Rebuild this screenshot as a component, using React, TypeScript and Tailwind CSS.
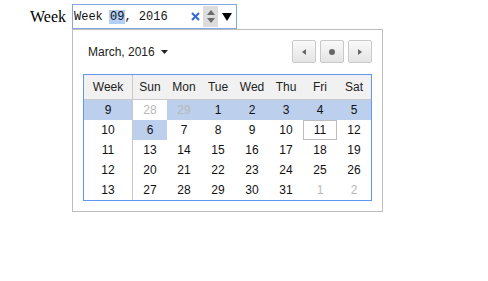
import React from "react";

type Day = { n: number; muted?: boolean; hl?: boolean; today?: boolean };

interface Row {
  week: number;
  weekHl?: boolean;
  days: Day[];
}

const rows: Row[] = [
  {
    week: 9,
    weekHl: true,
    days: [
      { n: 28, muted: true },
      { n: 29, muted: true, hl: true },
      { n: 1, hl: true },
      { n: 2, hl: true },
      { n: 3, hl: true },
      { n: 4, hl: true },
      { n: 5, hl: true },
    ],
  },
  {
    week: 10,
    days: [{ n: 6, hl: true }, { n: 7 }, { n: 8 }, { n: 9 }, { n: 10 }, { n: 11, today: true }, { n: 12 }],
  },
  { week: 11, days: [13, 14, 15, 16, 17, 18, 19].map((n) => ({ n })) },
  { week: 12, days: [20, 21, 22, 23, 24, 25, 26].map((n) => ({ n })) },
  {
    week: 13,
    days: [{ n: 27 }, { n: 28 }, { n: 29 }, { n: 30 }, { n: 31 }, { n: 1, muted: true }, { n: 2, muted: true }],
  },
];

const heads = ["Sun", "Mon", "Tue", "Wed", "Thu", "Fri", "Sat"];

const NavButton = ({ children }: { children: React.ReactNode }) => (
  <button className="w-[24px] h-[23px] flex items-center justify-center rounded-[2px] border border-[#c9c9c9] bg-gradient-to-b from-[#fafafa] to-[#e4e4e4]">
    {children}
  </button>
);

const App = () => {
  return (
    <div className="w-[488px] h-[281px] bg-white pt-[4px] pl-[30px] font-['Liberation_Sans',Arial,sans-serif]">
      {/* input row */}
      <div className="flex items-center">
        <span className="w-[42px] text-[16px] leading-none text-black font-['Liberation_Serif','Times_New_Roman',serif]">
          Week
        </span>
        <div className="w-[165px] h-[25px] border border-[#7fa7ea] flex items-center pl-[1px] pr-[4px]">
          <span className="text-[12px] text-[#111] font-['Liberation_Mono',monospace] whitespace-pre">
            Week <span className="bg-[#b3cff5] px-[1px] -mx-[1px]">09</span>, 2016
          </span>
          <div className="ml-auto flex items-center">
            <svg width="9" height="9" viewBox="0 0 9 9" className="mr-[3px]">
              <path d="M1 1 L8 8 M8 1 L1 8" stroke="#3a6ccf" strokeWidth="2.2" />
            </svg>
            <div className="w-[15px] h-[21px] bg-[#dcdcdc] flex flex-col items-center justify-center gap-[3px]">
              <svg width="8" height="5" viewBox="0 0 8 5">
                <path d="M4 0 L8 5 L0 5 Z" fill="#6a6a6a" />
              </svg>
              <svg width="8" height="5" viewBox="0 0 8 5">
                <path d="M0 0 L8 0 L4 5 Z" fill="#6a6a6a" />
              </svg>
            </div>
            <svg width="10" height="8" viewBox="0 0 10 8" className="ml-[4px]">
              <path d="M0 0 L10 0 L5 8 Z" fill="#000" />
            </svg>
          </div>
        </div>
      </div>

      {/* calendar popup */}
      <div className="ml-[42px] w-[311px] border border-[#bdbdbd] bg-white px-[10px] pt-[10px] pb-[10px]">
        <div className="flex items-center justify-between h-[23px] mb-[11px]">
          <div className="flex items-center pl-[5px] text-[12px] text-[#222]">
            March, 2016
            <svg width="7" height="4" viewBox="0 0 7 4" className="ml-[6px]">
              <path d="M0 0 L7 0 L3.5 4 Z" fill="#222" />
            </svg>
          </div>
          <div className="flex gap-[4px]">
            <NavButton>
              <svg width="4" height="6" viewBox="0 0 4 6">
                <path d="M4 0 L0 3 L4 6 Z" fill="#666" />
              </svg>
            </NavButton>
            <NavButton>
              <span className="w-[6px] h-[6px] rounded-full bg-[#666]" />
            </NavButton>
            <NavButton>
              <svg width="4" height="6" viewBox="0 0 4 6">
                <path d="M0 0 L4 3 L0 6 Z" fill="#666" />
              </svg>
            </NavButton>
          </div>
        </div>

        <div className="border border-[#5f97f2] text-[12px] text-[#111]">
          <div className="grid grid-cols-[49px_repeat(7,34px)] h-[25px] bg-[#f1f1f1] border-b border-[#c9c9c9] text-[#222]">
            <div className="flex items-center justify-center border-r border-[#c9c9c9]">Week</div>
            {heads.map((h) => (
              <div key={h} className="flex items-center justify-center">
                {h}
              </div>
            ))}
          </div>
          {rows.map((r) => (
            <div key={r.week} className="grid grid-cols-[49px_repeat(7,34px)] h-[20px]">
              <div
                className={
                  "flex items-center justify-center border-r border-[#c9c9c9] " +
                  (r.weekHl ? "bg-[#bccfec]" : "bg-white")
                }
              >
                {r.week}
              </div>
              {r.days.map((d, i) => (
                <div
                  key={i}
                  className={
                    "flex items-center justify-center " +
                    (d.hl ? "bg-[#bccfec] " : "") +
                    (d.muted ? "text-[#b8b8b8] " : "") +
                    (d.today ? "border border-[#bdbdbd]" : "")
                  }
                >
                  {d.n}
                </div>
              ))}
            </div>
          ))}
        </div>
      </div>
    </div>
  );
};

export default App;
